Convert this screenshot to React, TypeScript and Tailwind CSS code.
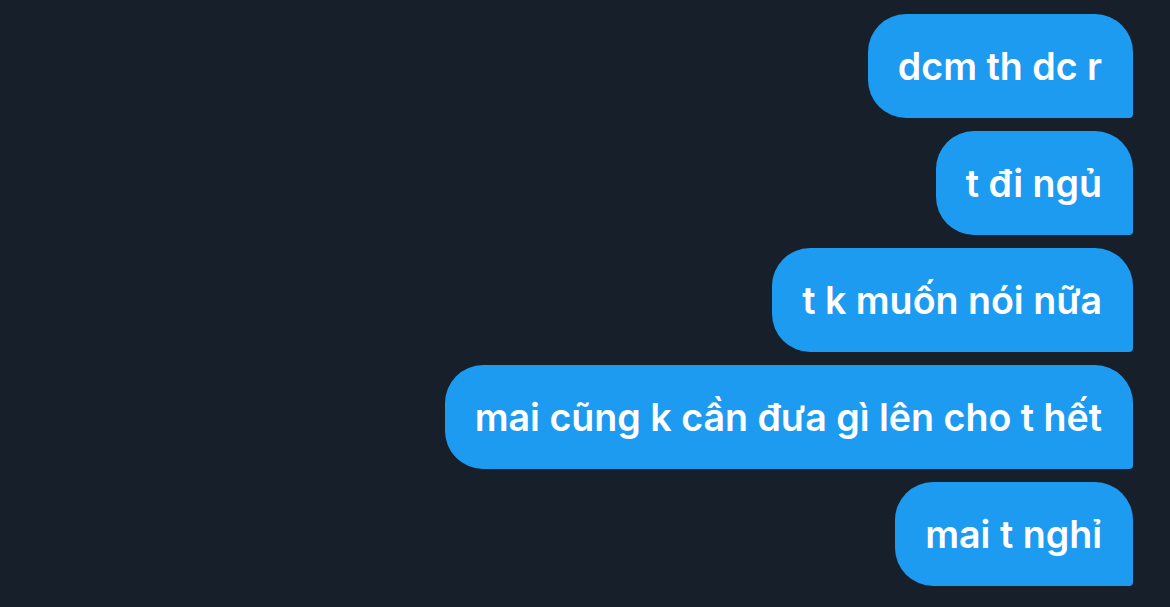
const messages = [
  'dcm th dc r',
  't đi ngủ',
  't k muốn nói nữa',
  'mai cũng k cần đưa gì lên cho t hết',
  'mai t nghỉ',
];

export default function App() {
  return (
    <div className="w-[1170px] h-[607px] bg-[#171f2a] overflow-hidden pt-[14px] pr-[37px] flex flex-col items-end gap-[13px] font-['Inter',sans-serif]">
      {messages.map((m) => (
        <div
          key={m}
          className="h-[104px] flex items-center pl-[30px] pr-[31px] pt-[2px] bg-[#1d9bf0] text-white text-[37.6px] font-semibold rounded-[38px] rounded-br-[4px] whitespace-nowrap"
        >
          {m}
        </div>
      ))}
    </div>
  );
}
